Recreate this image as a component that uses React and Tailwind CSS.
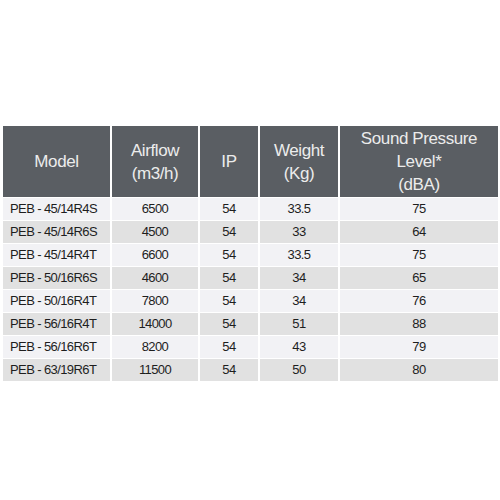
const ROWS = [
  ['PEB - 45/14R4S', '6500', '54', '33.5', '75'],
  ['PEB - 45/14R6S', '4500', '54', '33', '64'],
  ['PEB - 45/14R4T', '6600', '54', '33.5', '75'],
  ['PEB - 50/16R6S', '4600', '54', '34', '65'],
  ['PEB - 50/16R4T', '7800', '54', '34', '76'],
  ['PEB - 56/16R4T', '14000', '54', '51', '88'],
  ['PEB - 56/16R6T', '8200', '54', '43', '79'],
  ['PEB - 63/19R6T', '11500', '54', '50', '80'],
];

const HEADERS = [
  ['Model'],
  ['Airflow', '(m3/h)'],
  ['IP'],
  ['Weight', '(Kg)'],
  ['Sound Pressure', 'Level*', '(dBA)'],
];

export default function App() {
  return (
    <div className="w-[500px] h-[500px] bg-white pt-[126px] pl-[3px] font-['Liberation_Sans',Arial,sans-serif]">
      <div className="grid grid-cols-[107px_86px_58px_78px_158px] gap-x-[2px] gap-y-px">
        {HEADERS.map((lines, i) => (
          <div
            key={i}
            className="h-[71px] bg-[#5a5e63] text-[#ececec] text-[17px] tracking-[-0.4px] leading-[23px] flex flex-col items-center justify-center text-center"
          >
            {lines.map((l) => (
              <span key={l}>{l}</span>
            ))}
          </div>
        ))}
        {ROWS.map((row, r) =>
          row.map((cell, c) => (
            <div
              key={`${r}-${c}`}
              className={`h-[22px] flex items-center text-[13px] text-[#1e1e1e] tracking-[-0.6px] ${
                c === 0 ? 'justify-start pl-[7px]' : 'justify-center'
              } ${r % 2 === 0 ? 'bg-[#f2f2f5]' : 'bg-[#e1e1e1]'}`}
            >
              {cell}
            </div>
          ))
        )}
      </div>
    </div>
  );
}
